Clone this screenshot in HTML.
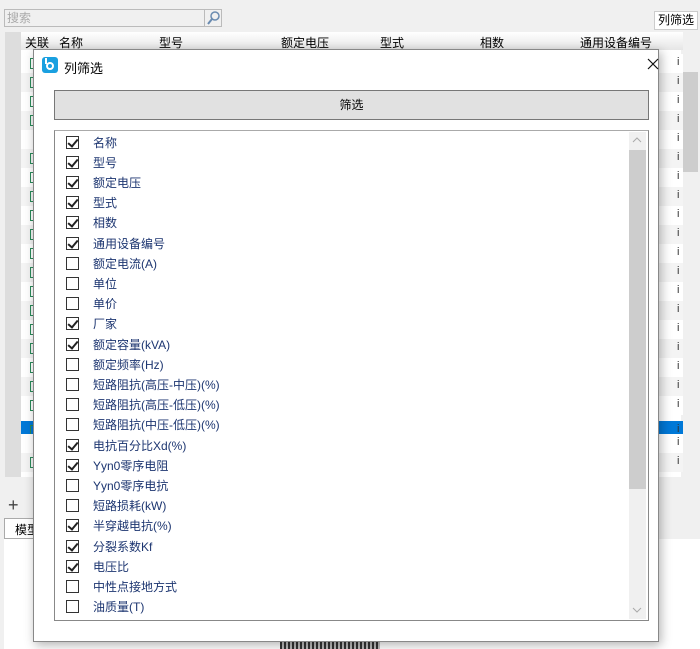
<!DOCTYPE html>
<html><head><meta charset="utf-8"><style>
*{margin:0;padding:0;box-sizing:border-box}
body{width:700px;height:649px;background:#f0f0f0;position:relative;overflow:hidden;font-family:"Liberation Sans","Noto Sans CJK SC",sans-serif;font-size:12px;color:#000}
.abs{position:absolute}
.item{position:absolute;left:66px;height:20px;display:flex;align-items:center}
.cb{width:13px;height:13px;border:1px solid #333;background:#fff;position:relative}
.cb.on::after{content:"";position:absolute;left:3px;top:0px;width:4px;height:8px;border-right:2px solid #222;border-bottom:2px solid #222;transform:rotate(40deg)}
.lbl{margin-left:14px;color:#1c3570;font-size:12px}
.row{position:absolute;left:21px;width:662px;height:19px}
.mk{position:absolute;left:9px;top:4px;width:5px;height:11px;border:1px solid #2a8a5a;border-right:none}
.rt{position:absolute;left:656px;top:2px;font-size:11px;color:#333}
</style></head><body>
<div class="abs" style="left:4px;top:9px;width:218px;height:18px;border:1px solid #bbb;background:#f0f0f0;color:#aaa;padding-left:2px;line-height:16px">搜索</div>
<div class="abs" style="left:204px;top:10px;width:17px;height:16px;border-left:1px solid #bbb"><svg width="16" height="16"><circle cx="10" cy="6" r="4" fill="none" stroke="#6a8bb0" stroke-width="1.5"/><line x1="7" y1="9" x2="3" y2="14" stroke="#6a8bb0" stroke-width="2"/></svg></div>
<div class="abs" style="left:654px;top:11px;width:44px;height:19px;border:1px solid #ccc;background:#fff;line-height:17px;text-align:center">列筛选</div>
<div class="abs" style="left:5px;top:32px;width:16px;height:445px;background:#ddd"></div>
<div class="abs" style="left:21px;top:32px;width:660px;height:445px;background:#fff"></div>
<div id="rows"></div>
<div class="abs" style="left:21px;top:32px;width:662px;height:18px;background:linear-gradient(#fff,#e6e6e6);line-height:22px">
<span class="abs" style="left:4px">关联</span><span class="abs" style="left:38px">名称</span><span class="abs" style="left:138px">型号</span><span class="abs" style="left:260px">额定电压</span><span class="abs" style="left:359px">型式</span><span class="abs" style="left:459px">相数</span><span class="abs" style="left:559px">通用设备编号</span></div>
<div class="abs" style="left:683px;top:55px;width:15px;height:422px;background:#f0f0f0"></div>
<div class="abs" style="left:683px;top:72px;width:15px;height:100px;background:#cdcdcd"></div>
<div class="abs" style="left:0px;top:477px;width:700px;height:20px;background:#f0f0f0"></div>
<div class="abs" style="left:8px;top:495px;font-size:18px;color:#444">+</div>
<div class="abs" style="left:4px;top:518px;width:40px;height:21px;border:1px solid #aaa;background:#fff;padding:2px 0 0 10px">模型</div>
<div class="abs" style="left:4px;top:539px;width:696px;height:110px;background:#fff"></div>
<div class="abs" style="left:280px;top:641px;width:100px;height:8px;background:repeating-linear-gradient(90deg,#333 0 2px,#bbb 2px 4px)"></div>
<div class="abs" style="left:33px;top:49px;width:626px;height:593px;background:#fff;border:1px solid #888;box-shadow:2px 3px 10px rgba(0,0,0,.3)">
 <div class="abs" style="left:8px;top:7px;width:16px;height:16px;border-radius:3px;background:#1aa0e0"><div class="abs" style="left:4px;top:5px;width:8px;height:8px;border-radius:50%;border:2px solid #fff"></div><div class="abs" style="left:3px;top:1px;width:2px;height:6px;background:#fff"></div></div>
 <div class="abs" style="left:30px;top:8px;font-size:13px">列筛选</div>
 <svg class="abs" style="left:613px;top:8px" width="12" height="12"><path d="M1 1L11 11M11 1L1 11" stroke="#111" stroke-width="1.2"/></svg>
 <div class="abs" style="left:20px;top:40px;width:595px;height:30px;background:#e1e1e1;border:1px solid #777;text-align:center;line-height:28px">筛选</div>
 <div class="abs" style="left:20px;top:80px;width:595px;height:491px;border:1px solid #888;border-top-color:#aaa;background:#fff"></div>
 <div class="abs" style="left:595px;top:82px;width:17px;height:487px;background:#f0f0f0"></div>
 <div class="abs" style="left:595px;top:100px;width:17px;height:339px;background:#cdcdcd"></div>
 <svg class="abs" style="left:598px;top:87px" width="10" height="6"><path d="M1 5L5 1L9 5" fill="none" stroke="#aaa"/></svg>
 <svg class="abs" style="left:598px;top:557px" width="10" height="6"><path d="M1 1L5 5L9 1" fill="none" stroke="#aaa"/></svg>
</div>
<div id="list"></div>
<script>
var items=[["名称",1],["型号",1],["额定电压",1],["型式",1],["相数",1],["通用设备编号",1],["额定电流(A)",0],["单位",0],["单价",0],["厂家",1],["额定容量(kVA)",1],["额定频率(Hz)",0],["短路阻抗(高压-中压)(%)",0],["短路阻抗(高压-低压)(%)",0],["短路阻抗(中压-低压)(%)",0],["电抗百分比Xd(%)",1],["Yyn0零序电阻",1],["Yyn0零序电抗",0],["短路损耗(kW)",0],["半穿越电抗(%)",1],["分裂系数Kf",1],["电压比",1],["中性点接地方式",0],["油质量(T)",0]];
var h="";items.forEach(function(it,i){h+='<div class="item" style="top:'+(132+i*20.2)+'px"><div class="cb'+(it[1]?' on':'')+'"></div><span class="lbl">'+it[0]+'</span></div>';});
document.getElementById("list").innerHTML=h;
var r="";for(var i=0;i<22;i++){var y=54+i*19;var sel=(i==19);if(sel)y=421;var bg=sel?'#0078d7':(i%2?'#f4f4f4':'#fff');r+='<div class="row" style="top:'+y+'px;background:'+bg+'">'+(i==4||i==20?'':'<div class="mk"></div>')+'<span class="rt">i</span></div>';}
document.getElementById("rows").innerHTML=r;
</script>
</body></html>
